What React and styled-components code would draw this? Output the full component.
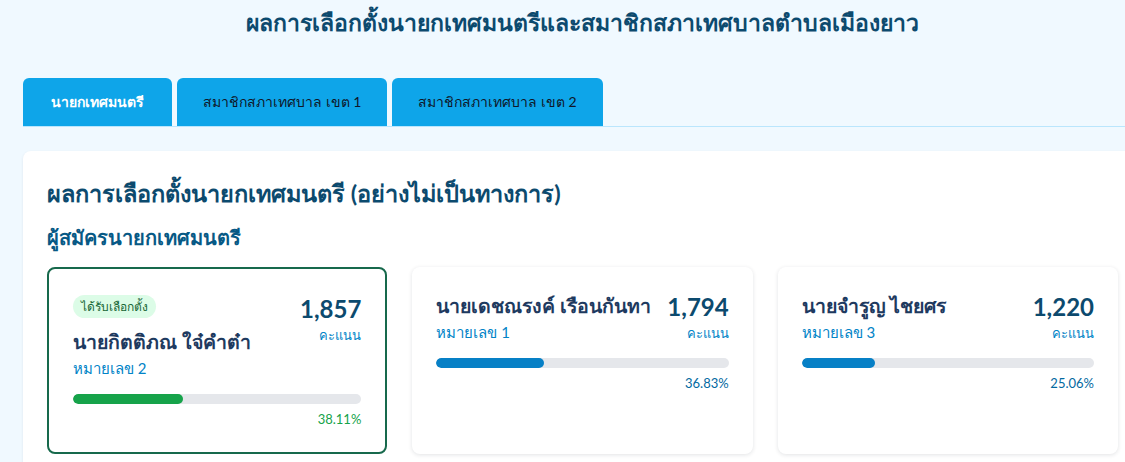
import React from 'react'
import styled, { createGlobalStyle } from 'styled-components'

const GlobalStyle = createGlobalStyle`
  html, body {
    margin: 0;
    padding: 0;
    background: #f0f9ff;
    overflow: hidden;
  }
  body {
    font-family: Lato, "Noto Sans", sans-serif;
  }
`

const candidates = [
  { name: 'นายกิตติภณ ใจ๋คำต๋า', no: 2, votes: '1,857', pct: 38.11, winner: true },
  { name: 'นายเดชณรงค์ เรือนกันทา', no: 1, votes: '1,794', pct: 36.83 },
  { name: 'นายจำรูญ ไชยศร', no: 3, votes: '1,220', pct: 25.06 },
]

const tabs = ['นายกเทศมนตรี', 'สมาชิกสภาเทศบาล เขต 1', 'สมาชิกสภาเทศบาล เขต 2']

const Page = styled.div`
  width: 1165px;
  padding: 0 23px;
  box-sizing: border-box;
`

const Title = styled.h1`
  margin: 0;
  padding-top: 6px;
  height: 72px;
  text-align: center;
  font-size: 23px;
  font-weight: 700;
  color: #0c4a6e;
  line-height: 32px;
`

const TabBar = styled.div`
  display: flex;
  gap: 5px;
  border-bottom: 1px solid #bae6fd;
`

const Tab = styled.button`
  height: 48px;
  padding: 0 ${p => (p.$active ? 28 : 26)}px;
  border: none;
  border-radius: 6px 6px 0 0;
  background: #0ea5e9;
  color: ${p => (p.$active ? '#ffffff' : '#0f172a')};
  font-family: inherit;
  font-size: 14px;
  font-weight: ${p => (p.$active ? 700 : 400)};
  cursor: pointer;
`

const Panel = styled.section`
  margin-top: 24px;
  background: #ffffff;
  border-radius: 8px;
  box-shadow: 0 1px 3px rgba(15, 23, 42, 0.08);
  padding: 24px;
`

const Heading = styled.h2`
  margin: 0;
  font-size: 23.5px;
  font-weight: 700;
  color: #0c4a6e;
  line-height: 36px;
`

const SubHeading = styled.h3`
  margin: 11px 0 15px;
  font-size: 20px;
  font-weight: 600;
  color: #075985;
  line-height: 30px;
`

const Grid = styled.div`
  display: grid;
  grid-template-columns: repeat(3, 1fr);
  gap: 25px;
`

const Card = styled.div`
  border-radius: 8px;
  background: #ffffff;
  padding: 24px;
  border: ${p => (p.$winner ? '2px solid #17694c' : 'none')};
  box-shadow: ${p => (p.$winner ? 'none' : '0 1px 4px rgba(15, 23, 42, 0.12)')};
`

const CardTop = styled.div`
  display: flex;
  justify-content: space-between;
  align-items: flex-start;
`

const Info = styled.div`
  display: flex;
  flex-direction: column;
  align-items: flex-start;
`

const Badge = styled.span`
  display: inline-flex;
  align-items: center;
  height: 23px;
  padding: 0 8px;
  margin-top: 2px;
  border-radius: 999px;
  background: #dcfce7;
  color: #166534;
  font-size: 12px;
  margin-bottom: 9px;
`

const Name = styled.div`
  font-size: 19.5px;
  font-weight: 700;
  color: #1e3a5f;
  line-height: 30px;
`

const Number = styled.div`
  font-size: 15px;
  color: #0284c7;
  line-height: 22px;
`

const Votes = styled.div`
  text-align: right;
  font-size: 24px;
  font-weight: 700;
  color: #0c4a6e;
  line-height: 32px;
`

const VoteLabel = styled.div`
  font-size: 13px;
  font-weight: 400;
  color: #0284c7;
  line-height: 20px;
`

const Track = styled.div`
  margin-top: 15px;
  height: 10px;
  border-radius: 999px;
  background: #e5e7eb;
  overflow: hidden;
`

const Fill = styled.div`
  height: 100%;
  border-radius: 999px;
  background: ${p => (p.$winner ? '#16a34a' : '#0780c6')};
`

const Percent = styled.div`
  margin-top: 6px;
  text-align: right;
  font-size: 13px;
  color: ${p => (p.$winner ? '#16a34a' : '#0369a1')};
  line-height: 18px;
`

function CandidateCard({ c }) {
  return (
    <Card $winner={c.winner}>
      <CardTop>
        <Info>
          {c.winner && <Badge>ได้รับเลือกตั้ง</Badge>}
          <Name>{c.name}</Name>
          <Number>หมายเลข {c.no}</Number>
        </Info>
        <Votes>
          {c.votes}
          <VoteLabel>คะแนน</VoteLabel>
        </Votes>
      </CardTop>
      <Track>
        <Fill $winner={c.winner} style={{ width: `${c.pct}%` }} />
      </Track>
      <Percent $winner={c.winner}>{c.pct.toFixed(2)}%</Percent>
    </Card>
  )
}

export default function App() {
  return (
    <>
      <GlobalStyle />
      <Page>
        <Title>ผลการเลือกตั้งนายกเทศมนตรีและสมาชิกสภาเทศบาลตำบลเมืองยาว</Title>
        <TabBar>
          {tabs.map((t, i) => (
            <Tab key={t} $active={i === 0}>{t}</Tab>
          ))}
        </TabBar>
        <Panel>
          <Heading>ผลการเลือกตั้งนายกเทศมนตรี (อย่างไม่เป็นทางการ)</Heading>
          <SubHeading>ผู้สมัครนายกเทศมนตรี</SubHeading>
          <Grid>
            {candidates.map(c => (
              <CandidateCard key={c.no} c={c} />
            ))}
          </Grid>
        </Panel>
      </Page>
    </>
  )
}
